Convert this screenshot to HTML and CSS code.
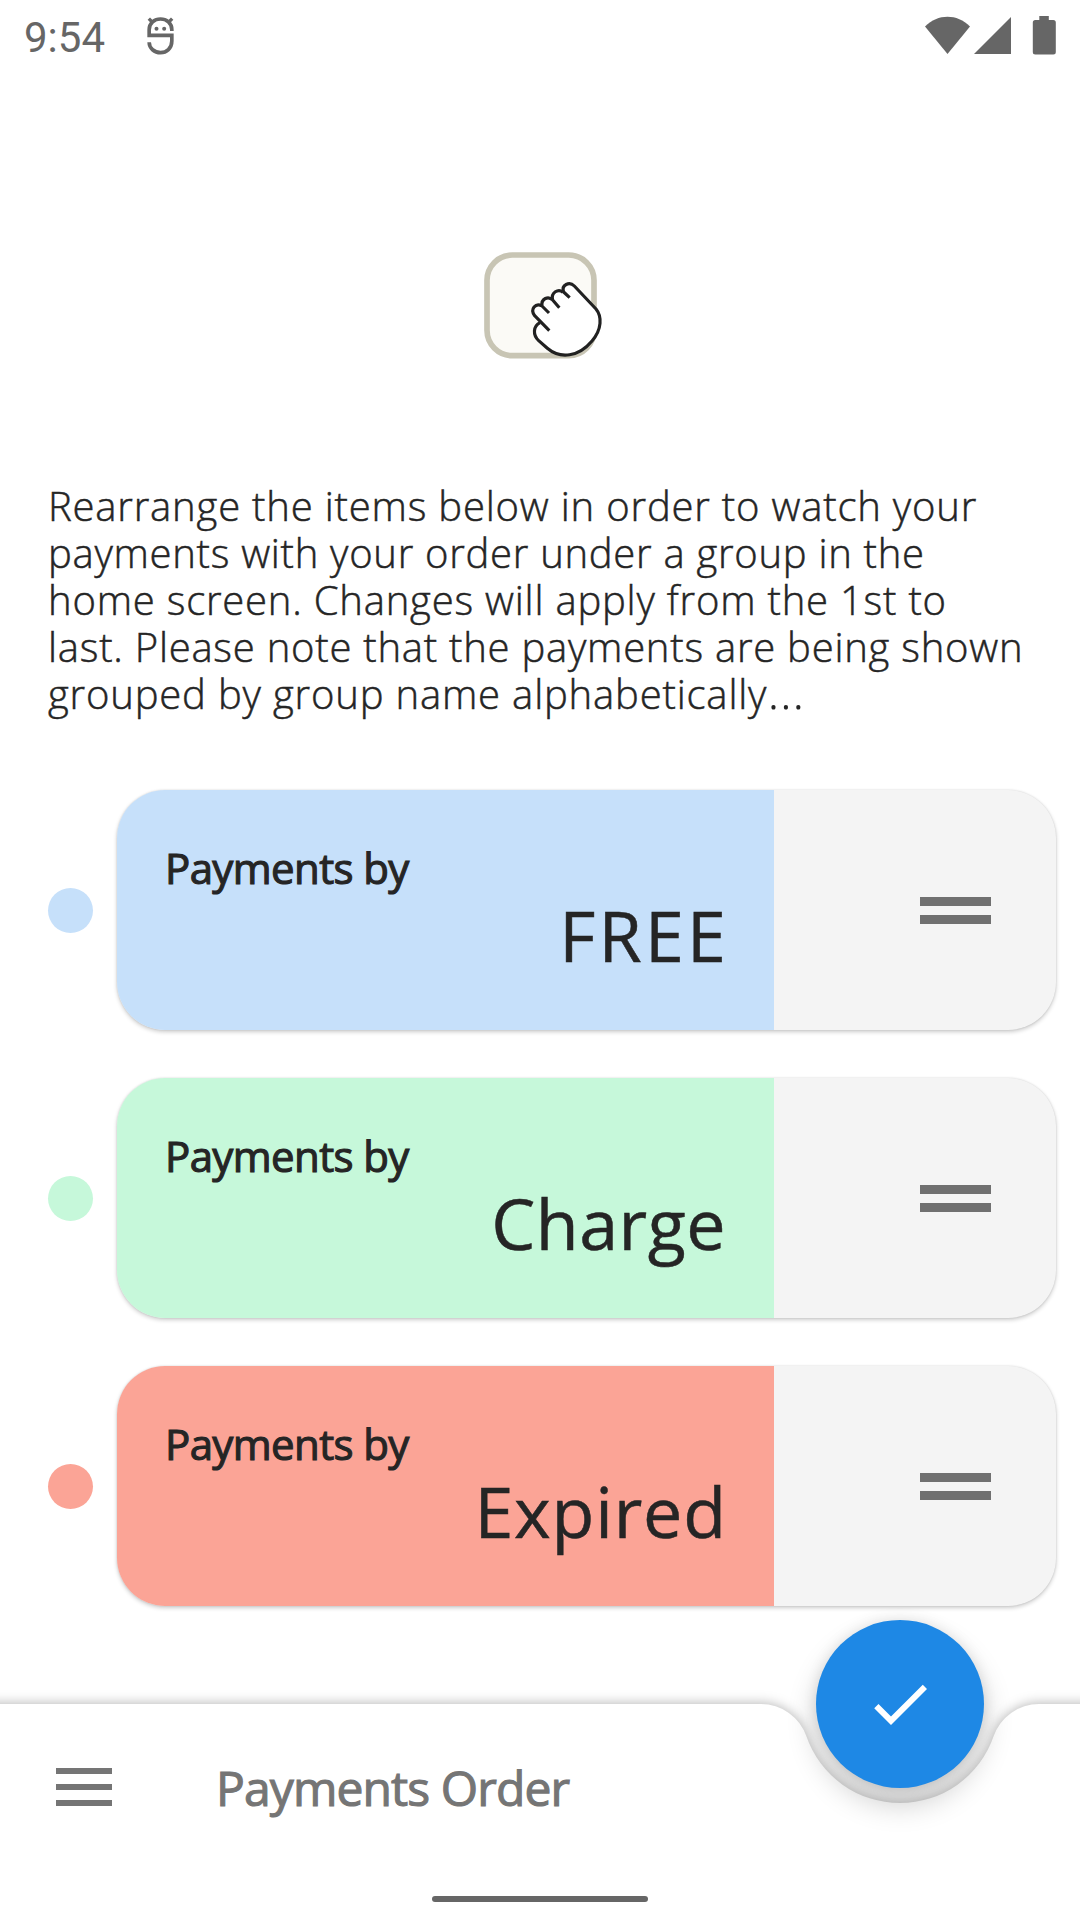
FILE: index.html
```html
<!DOCTYPE html>
<html lang="en">
<head>
<meta charset="utf-8">
<title>Payments Order</title>
<link rel="stylesheet" href="styles.css">
</head>
<body>
<div class="screen">
  <header class="status">
    <span class="clock">9:54</span>
    <svg class="debug-icon" viewBox="0 0 80 114" fill="none" stroke="#666" stroke-width="11">
      <path d="M74 42V38C74 18 58 6 40 6S6 18 6 38V55H74V72C74 94 58 107 40 107S6 94 6 76"/>
      <path d="M5 5L18 18M75 5L62 18" stroke-width="10"/>
      <circle cx="28" cy="35" r="6" fill="#666" stroke="none"/><circle cx="51" cy="35" r="6" fill="#666" stroke="none"/>
    </svg>
    <svg class="signals" viewBox="0 0 132 40" fill="#666">
      <path d="M0 10.5C13 -2.500 32 -2.500 45 10.500L22.500 38Z"/>
      <path d="M49 38L86 1V38Z"/>
      <path d="M115 0h9.500v4H129a2.500 2.500 0 0 1 2.500 2.500V36a2.500 2.500 0 0 1-2.500 2.500h-18a2.500 2.500 0 0 1-2.500-2.500V6.500A2.500 2.500 0 0 1 111 4h4z" transform="translate(-.7 0)"/>
    </svg>
  </header>

  <main class="content">
    <svg class="drag-art" viewBox="0 0 360 324">
      <rect x="9" y="9" width="321" height="302" rx="76" fill="#fbfaf6" stroke="#c8c5b4" stroke-width="17"/>
      <g transform="translate(-72 -66)" fill="#fff" stroke="#212121" stroke-width="9.500" stroke-linejoin="round">
        <path stroke="none" d="M308 183C306 162 330 155 343 168L406 237C428 262 425 300 392 338C355 380 305 390 262 355L236 332C218 315 218 290 240 278L222 257C210 238 225 222 245 227C245 205 265 200 276 208C275 188 295 175 308 183Z"/>
        <path fill="none" d="M329 203L311 186C303 165 328 153 343 168L408 237C426 259 426 298 396 333C356 381 301 388 262 355L236 332C218 315 219 289 240 278"/>
        <path fill="none" d="M268 302L224 257C209 238 227 217 246 228L267 249M246 228C243 205 265 197 278 210L298 233M278 210C272 188 295 174 309 187"/>
      </g>
    </svg>

    <p class="intro">
      <span class="line l1">Rearrange the items below in order to watch your</span>
      <span class="line l2">payments with your order under a group in the</span>
      <span class="line l3">home screen. Changes will apply from the 1st to</span>
      <span class="line l4">last. Please note that the payments are being shown</span>
      <span class="line l5">grouped by group name alphabetically<span class="more">…</span></span>
    </p>

    <ul class="list">
      <li class="row blue">
        <i class="dot"></i>
        <div class="card">
          <div class="label"><span class="by">Payments by</span><span class="name free">FREE</span></div>
          <div class="grip"><i></i><i></i></div>
        </div>
      </li>
      <li class="row green">
        <i class="dot"></i>
        <div class="card">
          <div class="label"><span class="by">Payments by</span><span class="name charge">Charge</span></div>
          <div class="grip"><i></i><i></i></div>
        </div>
      </li>
      <li class="row red">
        <i class="dot"></i>
        <div class="card">
          <div class="label"><span class="by">Payments by</span><span class="name expired">Expired</span></div>
          <div class="grip"><i></i><i></i></div>
        </div>
      </li>
    </ul>
  </main>

  <footer class="bar">
    <svg class="bar-shape" viewBox="0 0 1080 216"><path fill="#fff" d="M-40 0H761A48 48 0 0 1 806.400 32.300A99 99 0 0 0 993.600 32.300A48 48 0 0 1 1039 0H1120V260H-40Z"/></svg>
    <div class="toolbar">
      <div class="menu"><i></i><i></i><i></i></div>
      <h1 class="title">Payments Order</h1>
    </div>
    <div class="home"></div>
    <button class="fab" aria-label="Confirm"><svg viewBox="0 0 24 24" fill="#fff"><path d="M9 16.170L4.830 12l-1.420 1.410L9 19 21 7l-1.410-1.410z"/></svg></button>
  </footer>
</div>
</body>
</html>
```
FILE: styles.css
```css
* { box-sizing: border-box; }
body { margin: 0; background: #fff; color: #252525; font-family: "Open Sans", "Noto Sans", sans-serif; }
.screen { width: 1080px; height: 1920px; display: flex; flex-direction: column; overflow: hidden; position: relative; }

.status { height: 72px; display: flex; align-items: flex-start; padding: 16px 23px 0 24px; }
.clock { font: 400 42px/44px Roboto, sans-serif; color: #666; width: 123px; }
.debug-icon { width: 27px; height: 38px; margin-top: 1px; }
.signals { width: 132px; height: 40px; margin-left: auto; }

.content { flex: 1; display: flex; flex-direction: column; }
.drag-art { width: 120px; height: 108px; margin: 180px 0 0 484px; }
.intro { margin: 122px 0 0 48px; font-size: 40px; line-height: 47px; font-weight: 300; -webkit-text-stroke: .5px #252525; }
.line { display: block; height: 47px; width: max-content; white-space: nowrap; }
.l1 { letter-spacing: .81px; }
.l2 { letter-spacing: .72px; }
.l3 { letter-spacing: .79px; }
.l4 { letter-spacing: .76px; }
.l5 { letter-spacing: .82px; }
.more { font-size: 52px; line-height: 0; -webkit-text-stroke: 0; }

.list { list-style: none; margin: 73px 24px 0 48px; padding: 0; display: flex; flex-direction: column; gap: 48px; }
.row { display: flex; align-items: center; gap: 24px; }
.dot { width: 45px; height: 45px; border-radius: 50%; background: var(--tint); }
.card { flex: 1; height: 240px; display: flex; border-radius: 48px; overflow: hidden; background: #f4f4f4; box-shadow: 0 2px 4px rgba(0,0,0,.2), 0 0 2px rgba(0,0,0,.12); }
.label { width: 657px; background: var(--tint); display: flex; flex-direction: column; padding: 48px 48px 0; white-space: nowrap; }
.by { font-size: 42px; line-height: 59px; letter-spacing: -.62px; -webkit-text-stroke: 1.1px #252525; }
.name { font-size: 70px; line-height: 76px; align-self: flex-end; font-weight: 400; -webkit-text-stroke: .5px #252525; }
.free { letter-spacing: 3.2px; margin-right: -3.2px; }
.charge { letter-spacing: .5px; }
.expired { letter-spacing: .8px; margin-right: -.8px; }
.blue { --tint: #c6e0fa; }
.green { --tint: #c6f8da; }
.red { --tint: #fba496; }
.grip { flex: 1; display: flex; flex-direction: column; justify-content: center; gap: 9px; padding-left: 146px; }
.grip i { width: 71px; height: 9px; background: #707070; }

.bar { height: 216px; position: relative; display: flex; flex-direction: column; }
.bar-shape { position: absolute; inset: 0; width: 1080px; height: 216px; overflow: visible; filter: drop-shadow(0 -1px 6px rgba(0,0,0,.28)); }
.toolbar { position: relative; display: flex; align-items: center; height: 168px; padding-left: 56px; }
.menu { width: 56px; display: flex; flex-direction: column; gap: 10px; margin-top: -2px; }
.menu i { height: 6px; background: #757575; }
.title { margin: 0 0 0 104px; font-size: 48px; line-height: 60px; font-weight: 400; letter-spacing: -.9px; -webkit-text-stroke: 1.1px #757575; color: #757575; white-space: nowrap; }
.home { position: relative; width: 216px; height: 6px; border-radius: 3px; background: #666; margin: 24px auto 0; }
.fab { position: absolute; left: 816px; top: -84px; width: 168px; height: 168px; border: 0; border-radius: 50%; padding: 0; background: #1e88e5; display: flex; align-items: center; justify-content: center; box-shadow: 0 16px 30px rgba(0,0,0,.2), 0 0 14px rgba(0,0,0,.1); }
.fab svg { width: 72px; height: 72px; }
```
